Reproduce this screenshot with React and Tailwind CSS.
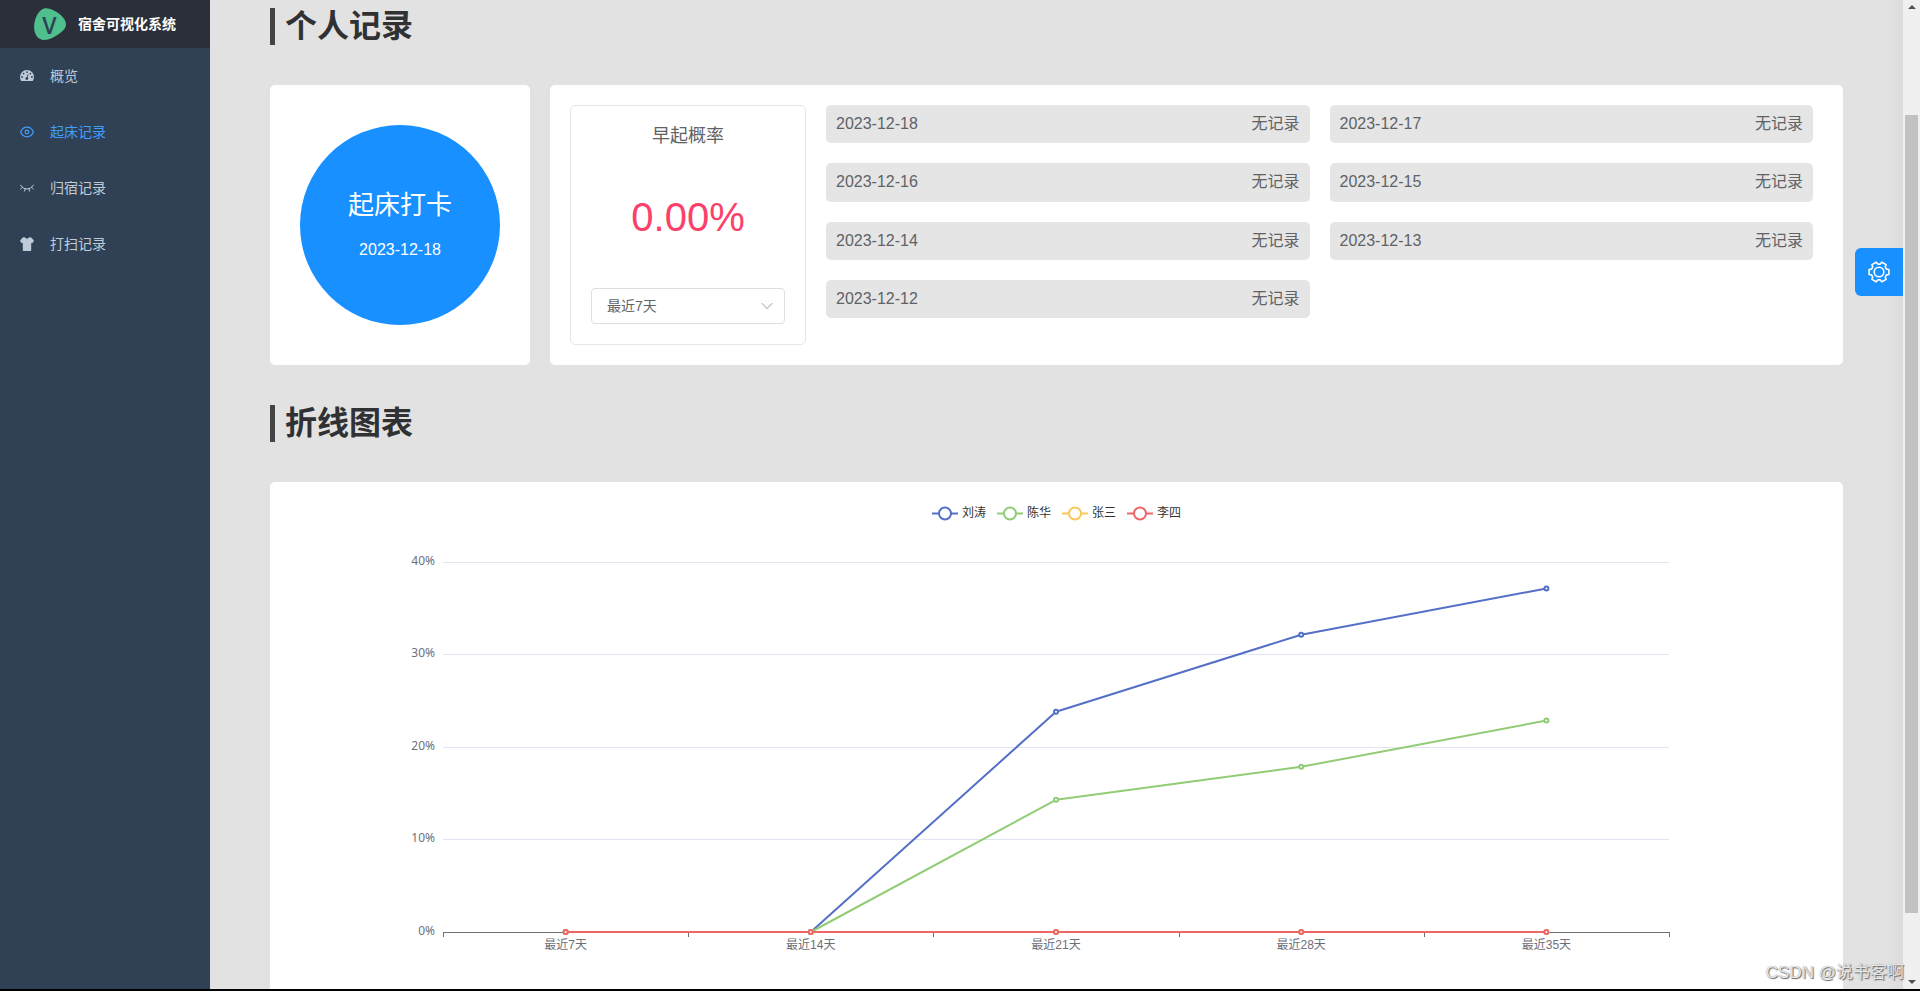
import React from 'react';
import { ChevronDown } from 'lucide-react';

const records = [
  '2023-12-18',
  '2023-12-17',
  '2023-12-16',
  '2023-12-15',
  '2023-12-14',
  '2023-12-13',
  '2023-12-12',
];

const ranges = ['最近7天', '最近14天', '最近21天', '最近28天', '最近35天'];

const series = [
  { name: '刘涛', color: '#5470c6', values: [0, 0, 23.81, 32.14, 37.14] },
  { name: '陈华', color: '#91cc75', values: [0, 0, 14.29, 17.86, 22.86] },
  { name: '张三', color: '#fac858', values: [0, 0, 0, 0, 0] },
  { name: '李四', color: '#ee6666', values: [0, 0, 0, 0, 0] },
];

// Iconos del menú lateral
const DashboardIcon = () => (
  <svg viewBox="0 0 14 14" className="w-3.5 h-3.5 shrink-0" aria-hidden="true">
    <path fill="currentColor" d="M7 1a7 7 0 0 0-7 7c0 1.4.4 2.7 1.1 3.8.1.2.3.3.5.3h10.800c.2 0 .4-.1.5-.3.7-1.1 1.1-2.4 1.1-3.8a7 7 0 0 0-7-7z" />
    <g fill="#304156">
      <circle cx="2.1" cy="8" r=".9" />
      <circle cx="3.6" cy="4.6" r=".9" />
      <circle cx="7" cy="3.1" r=".9" />
      <circle cx="10.4" cy="4.6" r=".9" />
      <circle cx="11.9" cy="8" r=".9" />
      <circle cx="6.8" cy="9.6" r="1.4" />
    </g>
    <path d="M6.800 9.600 8 5.600" stroke="#304156" strokeWidth=".9" strokeLinecap="round" />
  </svg>
);

const EyeIcon = () => (
  <svg viewBox="0 0 14 14" className="w-3.5 h-3.5 shrink-0" fill="none" stroke="currentColor" strokeWidth="1.2" aria-hidden="true">
    <path d="M.6 7C2 3.800 4.200 2.200 7 2.200S12 3.800 13.400 7C12 10.200 9.800 11.800 7 11.800S2 10.200.6 7z" />
    <circle cx="7" cy="7" r="1.8" />
  </svg>
);

const EyeClosedIcon = () => (
  <svg viewBox="0 0 14 14" className="w-3.5 h-3.5 shrink-0" fill="none" stroke="currentColor" strokeWidth="1" strokeLinecap="round" aria-hidden="true">
    <path d="M.5 4C2 6.500 4.200 8 7 8s5-1.500 6.500-4M2.500 6.200.7 7.900M5.200 7.800l-.8 2.300M8.800 7.800l.8 2.300M11.500 6.200 13.300 7.900" />
  </svg>
);

const ShirtIcon = () => (
  <svg viewBox="0 0 14 14" className="w-3.5 h-3.5 shrink-0" fill="currentColor" aria-hidden="true">
    <path d="M3.700.2h1.100c.5.900 1.300 1.300 2.200 1.300S8.700 1.100 9.200.2h1.100c.5 0 .9.200 1.200.5L14 3.700l-1.700 2.600-1.100-.5v7.100c0 .6-.4 1-1 1H3.800c-.6 0-1-.4-1-1V5.800l-1.100.5L0 3.700 2.500.7c.3-.3.7-.5 1.200-.5z" />
  </svg>
);

// Contorno del engranaje: seis dientes repartidos cada 60 grados
const gearPoints = [0, 60, 120, 180, 240, 300]
  .flatMap(base => [[-14, 10.200], [14, 10.200], [21, 8], [39, 8]].map(([offset, radius]) => {
    const angle = ((base + offset) * Math.PI) / 180;
    return `${(12 + radius * Math.cos(angle)).toFixed(2)},${(12 + radius * Math.sin(angle)).toFixed(2)}`;
  }))
  .join(' ');

const GearIcon = () => (
  <svg viewBox="0 0 24 24" className="w-6 h-6" fill="none" stroke="currentColor" strokeWidth="1.600" strokeLinejoin="round" aria-hidden="true">
    <polygon points={gearPoints} />
    <circle cx="12" cy="12" r="4.800" />
  </svg>
);

const menu = [
  { label: '概览', icon: DashboardIcon },
  { label: '起床记录', icon: EyeIcon, active: true },
  { label: '归宿记录', icon: EyeClosedIcon },
  { label: '打扫记录', icon: ShirtIcon },
];

const Sidebar = () => (
  <aside className="w-[210px] shrink-0 bg-[#304156]">
    <a href="#" className="flex items-center justify-center gap-3 h-12 bg-[#2b2f3a] text-white text-sm font-bold">
      <svg viewBox="0 0 32 32" className="w-8 h-8" aria-hidden="true">
        <path fill="#4fc08d" d="M11 .3C16 -.5 25 4.500 29 9.500c4 5 4 9 0 13C24 27.500 15 32.500 9 31.900 3 31 .2 25.500.1 19 0 12 4 1.500 11 .3z" />
        <text x="15.500" y="25.500" textAnchor="middle" fontSize="23" fontWeight="600" fontFamily="Open Sans, Noto Sans, sans-serif" fill="#304156">V</text>
      </svg>
      <h1>宿舍可视化系统</h1>
    </a>
    <nav>
      {menu.map(({ label, icon: Icon, active }) => (
        <a
          key={label}
          href="#"
          className={`flex items-center gap-4 h-14 px-5 text-sm ${active ? 'text-[#409eff]' : 'text-[#bfcbd9]'}`}
        >
          <Icon />
          {label}
        </a>
      ))}
    </nav>
  </aside>
);

const SectionTitle = ({ children }) => (
  <h2 className="border-l-[5px] border-[#444444] pl-2.5 text-[32px] leading-[37px] font-bold text-[#303133]">
    {children}
  </h2>
);

const RateBox = () => (
  <div className="flex flex-col items-center justify-between w-[236px] shrink-0 p-5 border border-[#e6e6e6] rounded-[5px]">
    <label htmlFor="range" className="text-lg leading-5">早起概率</label>
    <p className="text-[40px] leading-10 text-[#fb4069]">0.00%</p>
    <div className="relative w-full">
      <select
        id="range"
        className="w-full h-9 pl-[15px] pr-8 appearance-none bg-white border border-[#dcdfe6] rounded text-sm"
      >
        {ranges.map(range => (
          <option key={range}>{range}</option>
        ))}
      </select>
      <ChevronDown className="absolute right-2 top-2 w-5 h-5 text-[#c0c4cc] pointer-events-none" strokeWidth={1.3} />
    </div>
  </div>
);

// Área de dibujo de la gráfica
const LEFT = 153;
const RIGHT = 1379;
const TOP = 60;
const BOTTOM = 430;
const STEP = (RIGHT - LEFT) / ranges.length;

const pointX = index => LEFT + STEP * (index + 0.5);
const pointY = value => BOTTOM - (value / 40) * (BOTTOM - TOP);

const LineChart = () => (
  <svg viewBox="0 0 1533 490" className="block w-full text-xs" role="img" aria-label="折线图表">
    {/* Leyenda */}
    {series.map(({ name, color }, index) => (
      <g key={name} transform={`translate(${642 + index * 65} 11)`}>
        <path d="M0 .5H26" stroke={color} strokeWidth="2" />
        <circle cx="13" cy=".5" r="6" fill="#fff" stroke={color} strokeWidth="2" />
        <text x="30" y="4" fill="#333">{name}</text>
      </g>
    ))}

    {/* Eje Y */}
    {[0, 10, 20, 30, 40].map(value => (
      <g key={value}>
        {value > 0 && (
          <path d={`M${LEFT} ${Math.floor(pointY(value)) + 0.5}H${RIGHT}`} stroke="#e0e6f1" />
        )}
        <text x={LEFT - 8} y={Math.floor(pointY(value)) + 3} textAnchor="end" fill="#6e7079" className="font-['Noto_Sans','Noto_Sans_CJK_SC',sans-serif]">
          {value}%
        </text>
      </g>
    ))}

    {/* Eje X */}
    <path d={`M${LEFT} ${BOTTOM + 0.5}H${RIGHT}`} stroke="#6e7079" />
    {[0, 1, 2, 3, 4, 5].map(tick => (
      <path key={tick} d={`M${Math.round(LEFT + STEP * tick) + 0.5} ${BOTTOM}v5`} stroke="#6e7079" />
    ))}
    {ranges.map((range, index) => (
      <text key={range} x={pointX(index)} y={BOTTOM + 17} textAnchor="middle" fill="#6e7079">
        {range}
      </text>
    ))}

    {/* Series */}
    {series.map(({ name, color, values }) => (
      <g key={name} fill="none" stroke={color} strokeWidth="2">
        <polyline points={values.map((value, index) => `${pointX(index)},${pointY(value)}`).join(' ')} strokeLinejoin="bevel" />
        {values.map((value, index) => (
          <circle key={index} cx={pointX(index)} cy={pointY(value)} r="2" fill="#fff" />
        ))}
      </g>
    ))}
  </svg>
);

const App = () => (
  <div className="flex flex-col h-screen overflow-hidden bg-black pb-0.5 font-['Liberation_Sans','Noto_Sans_CJK_SC',sans-serif] text-[#606266]">
    <div className="relative flex flex-1 min-h-0">
      <Sidebar />

      <main className="flex-1 min-w-0 overflow-hidden bg-[#e2e2e2] px-[60px] pt-2">
        <div className="flex flex-col gap-10">
          <SectionTitle>个人记录</SectionTitle>

          <section className="flex gap-5">
            <div className="px-[30px] py-10 bg-white rounded-[5px]">
              <button className="flex flex-col items-center justify-center gap-5 w-[200px] h-[200px] rounded-full bg-[#1890ff] text-white">
                <span className="text-[26px] leading-[30px]">起床打卡</span>
                <span className="text-base leading-5">2023-12-18</span>
              </button>
            </div>

            <div className="flex flex-1 gap-5 py-5 pl-5 pr-[30px] bg-white rounded-[5px]">
              <RateBox />
              <ul className="grid flex-1 grid-cols-2 grid-rows-4 gap-5 self-start h-[213px]">
                {records.map(date => (
                  <li key={date} className="flex items-center justify-between px-2.5 bg-[#e5e5e5] rounded-[5px] text-base leading-5">
                    <span>{date}</span>
                    <span>无记录</span>
                  </li>
                ))}
              </ul>
            </div>
          </section>

          <SectionTitle>折线图表</SectionTitle>

          <section className="p-5 bg-white rounded-[5px]">
            <LineChart />
          </section>
        </div>
      </main>

      {/* Sombra del panel de ajustes */}
      <div className="absolute inset-y-0 right-[17px] w-4 bg-linear-to-r from-transparent to-black/3" />
      <button
        aria-label="设置"
        className="absolute right-[17px] top-[248px] flex items-center justify-center w-12 h-12 rounded-l-md bg-[#1890ff] text-white"
      >
        <GearIcon />
      </button>

      {/* Barra de desplazamiento */}
      <div className="flex flex-col items-center justify-between w-[17px] shrink-0 bg-[#f0f0f0] py-1 text-[#505050]">
        <svg viewBox="0 0 8 4" className="w-2 h-1 mt-px" aria-hidden="true">
          <path fill="currentColor" d="M4 0 8 4H0z" />
        </svg>
        <div className="flex-1 w-[13px] mt-[106px] mb-[67px] bg-[#c1c1c1]" />
        <svg viewBox="0 0 8 4" className="w-2 h-1 mb-px" aria-hidden="true">
          <path fill="currentColor" d="M0 0H8L4 4z" />
        </svg>
      </div>

      <p className="absolute right-4 bottom-1 text-[17px] leading-6 text-white/80 [text-shadow:1px_1px_1px_#666,0_0_1px_#888]">
        CSDN @说书客啊
      </p>
    </div>
  </div>
);

export default App;
